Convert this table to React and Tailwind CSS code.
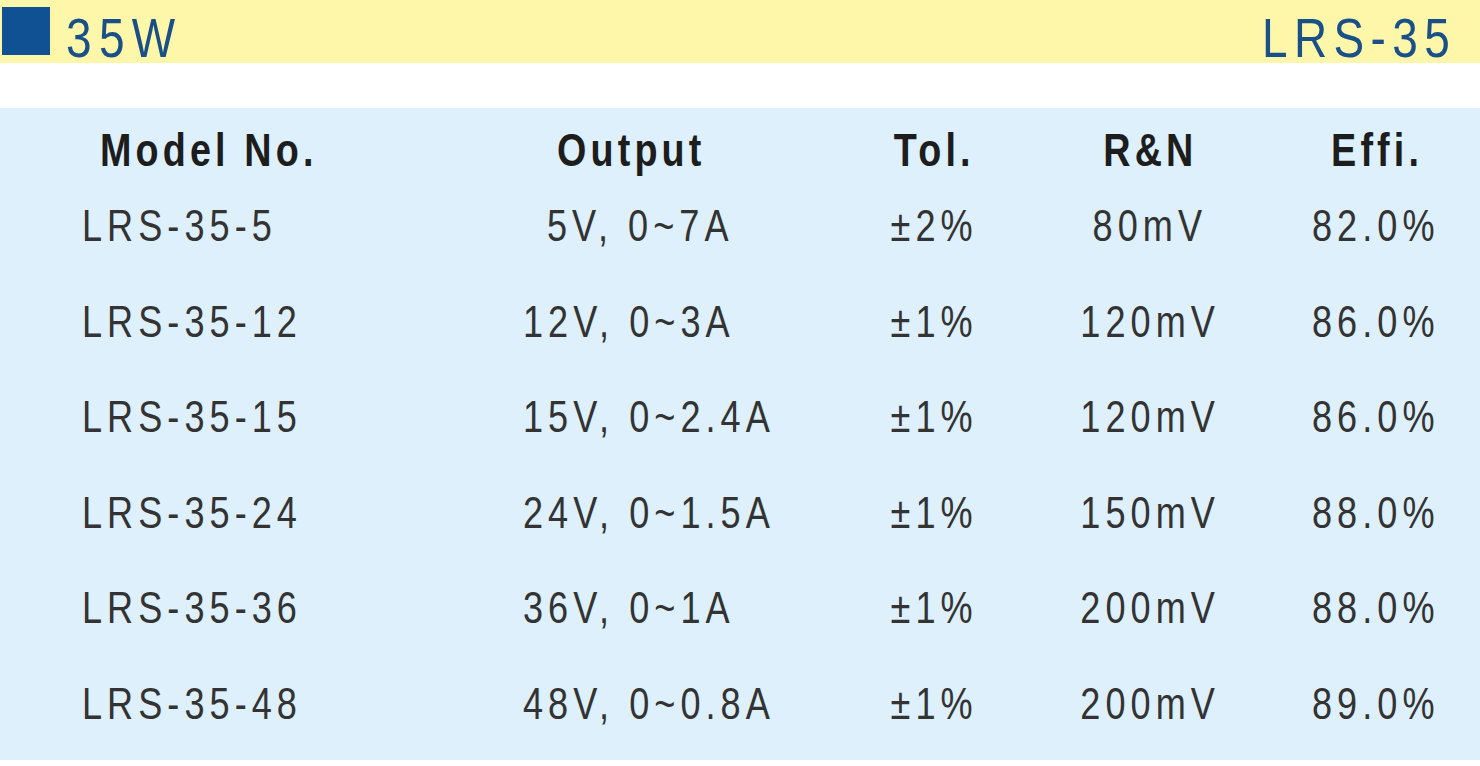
import React from "react";

const rows = [
  { model: "LRS-35-5", out: "5V, 0~7A", pad: true, tol: "±2%", rn: "80mV", eff: "82.0%" },
  { model: "LRS-35-12", out: "12V, 0~3A", tol: "±1%", rn: "120mV", eff: "86.0%" },
  { model: "LRS-35-15", out: "15V, 0~2.4A", tol: "±1%", rn: "120mV", eff: "86.0%" },
  { model: "LRS-35-24", out: "24V, 0~1.5A", tol: "±1%", rn: "150mV", eff: "88.0%" },
  { model: "LRS-35-36", out: "36V, 0~1A", tol: "±1%", rn: "200mV", eff: "88.0%" },
  { model: "LRS-35-48", out: "48V, 0~0.8A", tol: "±1%", rn: "200mV", eff: "89.0%" },
];

// the sheet uses a condensed face; squeeze Arial-metric text horizontally
function Narrow({ children, center }) {
  return (
    <span
      className={
        center
          ? "inline-block whitespace-nowrap scale-x-[0.82] origin-center"
          : "inline-block whitespace-nowrap scale-x-[0.82] origin-left"
      }
    >
      {children}
    </span>
  );
}

export default function App() {
  return (
    <div className="w-[1480px] h-[766px] bg-white overflow-hidden font-['Liberation_Sans',Arial,sans-serif]">
      {/* title band */}
      <div className="h-[63px] bg-[#fef6a9] flex items-start justify-between">
        <div className="flex items-start">
          <div className="ml-[2px] mt-[7px] w-[48px] h-[48px] bg-[#0f5193]" />
          <span className="ml-[16px] mt-[10px] text-[56px] leading-[56px] tracking-[0.16em] text-[#1a5088]">
            <Narrow>35W</Narrow>
          </span>
        </div>
        <span className="mr-[8px] mt-[10px] text-[56px] leading-[56px] tracking-[0.14em] text-[#1a5088] w-[210px]">
          <Narrow>LRS-35</Narrow>
        </span>
      </div>

      {/* spec table */}
      <div className="mt-[45px] h-[652px] bg-[#ddf0fb] pt-[16px]">
        <div className="flex text-[46px] leading-[52px] font-bold tracking-[0.11em] text-[#1d1d1d]">
          <div className="w-[470px] shrink-0 pl-[100px]"><Narrow>Model No.</Narrow></div>
          <div className="w-[330px] shrink-0 pl-[87px]"><Narrow>Output</Narrow></div>
          <div className="w-[260px] shrink-0 pl-[8px] text-center"><Narrow center>Tol.</Narrow></div>
          <div className="w-[180px] shrink-0 text-center"><Narrow center>R&amp;N</Narrow></div>
          <div className="w-[240px] shrink-0 pl-[34px] text-center"><Narrow center>Effi.</Narrow></div>
        </div>
        <div className="mt-[2px] text-[44px] leading-[95.5px] tracking-[0.14em] text-[#333333]">
          {rows.map((r) => (
            <div key={r.model} className="flex">
              <div className="w-[470px] shrink-0 pl-[82px]"><Narrow>{r.model}</Narrow></div>
              <div className={r.pad ? "w-[330px] shrink-0 pl-[77px]" : "w-[330px] shrink-0 pl-[53px]"}>
                <Narrow>{r.out}</Narrow>
              </div>
              <div className="w-[260px] shrink-0 pl-[8px] text-center"><Narrow center>{r.tol}</Narrow></div>
              <div className="w-[180px] shrink-0 text-center"><Narrow center>{r.rn}</Narrow></div>
              <div className="w-[240px] shrink-0 pl-[32px] text-center"><Narrow center>{r.eff}</Narrow></div>
            </div>
          ))}
        </div>
      </div>
    </div>
  );
}
